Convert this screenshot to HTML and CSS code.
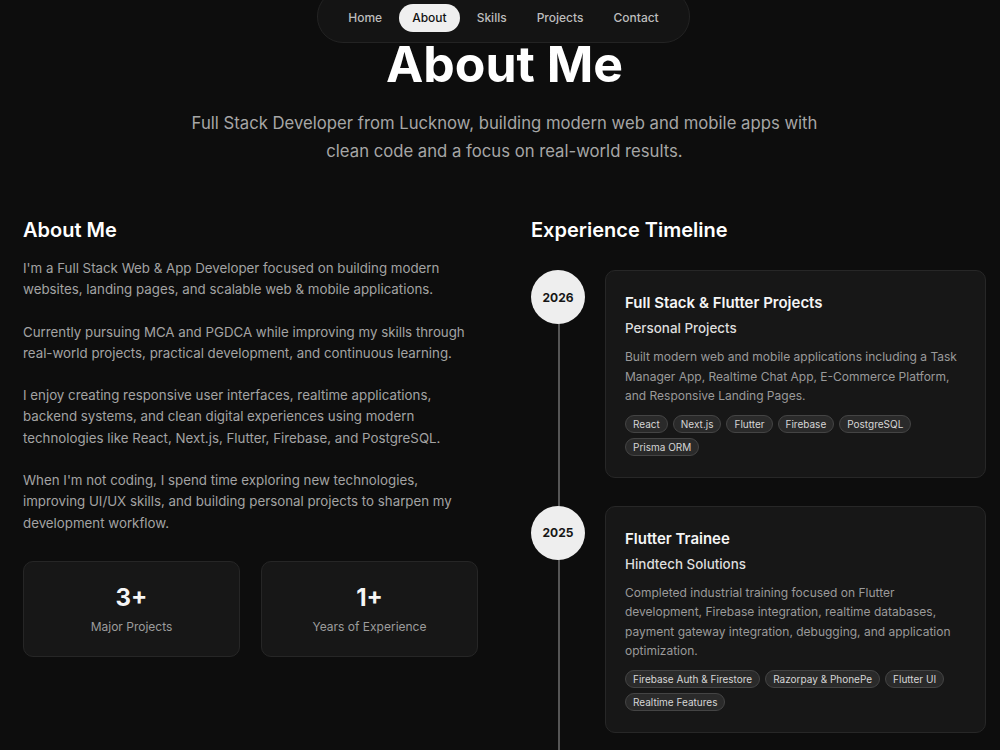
FILE: index.html
```html
<!DOCTYPE html>
<html lang="en">
	<head>
		<meta charset="UTF-8">
		<title>About Me</title>
		<link rel="stylesheet" href="styles.css">
	</head>
	<body>
		<nav class="navbar">
			<a href="#" class="nav-link">Home</a>
			<a href="#" class="nav-link active">About</a>
			<a href="#" class="nav-link">Skills</a>
			<a href="#" class="nav-link">Projects</a>
			<a href="#" class="nav-link">Contact</a>
		</nav>

		<header class="hero">
			<h1 class="hero-title">About Me</h1>
			<p class="hero-sub">Full Stack Developer from Lucknow, building modern web and mobile apps with clean code and a focus on real-world results.</p>
		</header>

		<main class="about">
			<section class="about-left">
				<h2 class="section-title">About Me</h2>
				<div class="bio">
					<p>I'm a Full Stack Web &amp; App Developer focused on building modern websites, landing pages, and scalable web &amp; mobile applications.</p>
					<p>Currently pursuing MCA and PGDCA while improving my skills through real-world projects, practical development, and continuous learning.</p>
					<p>I enjoy creating responsive user interfaces, realtime applications, backend systems, and clean digital experiences using modern technologies like React, Next.js, Flutter, Firebase, and PostgreSQL.</p>
					<p>When I'm not coding, I spend time exploring new technologies, improving UI/UX skills, and building personal projects to sharpen my development workflow.</p>
				</div>
				<div class="stats">
					<div class="stat">
						<div class="stat-num">3+</div>
						<div class="stat-label">Major Projects</div>
					</div>
					<div class="stat">
						<div class="stat-num">1+</div>
						<div class="stat-label">Years of Experience</div>
					</div>
				</div>
			</section>

			<section class="about-right">
				<h2 class="section-title">Experience Timeline</h2>
				<div class="timeline">
					<div class="tl-item">
						<div class="tl-year">2026</div>
						<div class="tl-card">
							<h3 class="tl-title">Full Stack &amp; Flutter Projects</h3>
							<div class="tl-org">Personal Projects</div>
							<p class="tl-desc">Built modern web and mobile applications including a Task Manager App, Realtime Chat App, E-Commerce Platform, and Responsive Landing Pages.</p>
							<div class="tags">
								<span class="tag">React</span>
								<span class="tag">Next.js</span>
								<span class="tag">Flutter</span>
								<span class="tag">Firebase</span>
								<span class="tag">PostgreSQL</span>
								<span class="tag">Prisma ORM</span>
							</div>
						</div>
					</div>
					<div class="tl-item">
						<div class="tl-year">2025</div>
						<div class="tl-card">
							<h3 class="tl-title">Flutter Trainee</h3>
							<div class="tl-org">Hindtech Solutions</div>
							<p class="tl-desc">Completed industrial training focused on Flutter development, Firebase integration, realtime databases, payment gateway integration, debugging, and application optimization.</p>
							<div class="tags">
								<span class="tag">Firebase Auth &amp; Firestore</span>
								<span class="tag">Razorpay &amp; PhonePe</span>
								<span class="tag">Flutter UI</span>
								<span class="tag">Realtime Features</span>
							</div>
						</div>
					</div>
				</div>
			</section>
		</main>
	</body>
</html>
```

FILE: styles.css
```css
* {
	box-sizing: border-box;
}
body {
	margin: 0;
	padding: 0 14px 0 23px;
	background-color: #0d0d0d;
	color: #f2f2f2;
	font-family: Inter, "Noto Sans", sans-serif;
	overflow: hidden;
}

/* floating nav */
.navbar {
	position: fixed;
	top: -10px;
	left: 317px;
	width: 373px;
	height: 53px;
	padding: 3px 0 0;
	display: flex;
	justify-content: center;
	align-items: center;
	gap: 4px;
	background-color: #141414;
	border: 1px solid #232323;
	border-radius: 26px;
	z-index: 10;
}
.nav-link {
	color: #bdbdbd;
	text-decoration: none;
	font-size: 12px;
	font-weight: 500;
	padding: 7px 13px;
	border-radius: 15px;
	line-height: 14px;
}
.nav-link.active {
	background-color: #efefef;
	color: #111;
}

/* heading block */
.hero {
	text-align: center;
	padding-top: 35px;
}
.hero-title {
	margin: 0;
	font-size: 50px;
	font-weight: 700;
	line-height: 58px;
	color: #fff;
}
.hero-sub {
	width: 660px;
	margin: 16px auto 0;
	font-size: 16.7px;
	line-height: 28px;
	color: #a6a6a6;
}

/* two columns */
.about {
	display: grid;
	grid-template-columns: 455px 455px;
	column-gap: 53px;
	padding-top: 51px;
}
.section-title {
	margin: 0 0 14px;
	font-size: 20px;
	font-weight: 600;
	line-height: 28px;
	color: #fff;
}
.bio p {
	margin: 0 0 21px;
	font-size: 13.3px;
	line-height: 21.3px;
	color: #a3a3a3;
}
.stats {
	display: grid;
	grid-template-columns: 1fr 1fr;
	gap: 21px;
	margin-top: 27px;
}
.stat {
	height: 96px;
	background-color: #171717;
	border: 1px solid #262626;
	border-radius: 10px;
	display: flex;
	flex-direction: column;
	align-items: center;
	justify-content: center;
}
.stat-num {
	font-size: 24px;
	font-weight: 700;
	line-height: 30px;
	color: #f5f5f5;
}
.stat-label {
	margin-top: 6px;
	font-size: 12px;
	color: #9c9c9c;
}

/* timeline */
.timeline {
	position: relative;
	margin-top: 26px;
}
.timeline::before {
	content: "";
	position: absolute;
	left: 27px;
	top: 30px;
	bottom: -400px;
	width: 2px;
	background-color: #555;
}
.tl-item {
	position: relative;
	display: flex;
	gap: 20px;
	margin-bottom: 28px;
}
.tl-year {
	flex: none;
	width: 54px;
	height: 54px;
	border-radius: 50%;
	background-color: #eeeeee;
	color: #161616;
	font-size: 12px;
	font-weight: 700;
	display: flex;
	align-items: center;
	justify-content: center;
	position: relative;
	z-index: 1;
}
.tl-card {
	flex: 1;
	background-color: #171717;
	border: 1px solid #272727;
	border-radius: 10px;
	padding: 20px 20px 21px 19px;
}
.tl-title {
	margin: 0;
	font-size: 15px;
	font-weight: 600;
	line-height: 24px;
	color: #f5f5f5;
}
.tl-org {
	margin-top: 3px;
	font-size: 13.4px;
	font-weight: 500;
	line-height: 20px;
	color: #dedede;
}
.tl-desc {
	margin: 9px 0 9px;
	font-size: 12px;
	line-height: 19.5px;
	color: #9a9a9a;
}
.tags {
	display: flex;
	flex-wrap: wrap;
	gap: 5px;
}
.tags .tag {
	font-size: 10px;
	line-height: 16px;
	padding: 0 7px;
	color: #d6d6d6;
	background-color: #2a2a2a;
	border: 1px solid #444;
	border-radius: 999px;
}
```
